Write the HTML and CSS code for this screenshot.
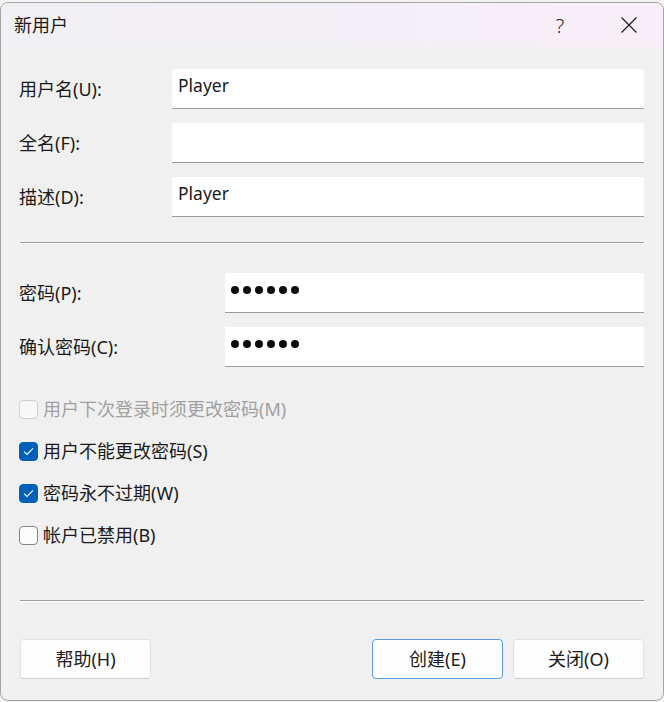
FILE: index.html
```html
<!DOCTYPE html>
<html lang="zh-CN">
<head>
<meta charset="utf-8">
<title>新用户</title>
<link rel="stylesheet" href="styles.css">
</head>
<body>
<div class="window">
  <div class="titlebar">
    <span class="title">新用户</span>
    <span class="cap-btn help">?</span>
    <span class="cap-btn close">
      <svg width="16" height="16" viewBox="0 0 16 16"><path d="M0.5 0.5 L15.5 15.5 M15.5 0.5 L0.5 15.5" stroke="#1b1b1b" stroke-width="1.2" fill="none"/></svg>
    </span>
  </div>
  <div class="content">
    <div class="form form-user">
      <label class="label">用户名(U):</label>
      <div class="field">Player</div>
      <label class="label">全名(F):</label>
      <div class="field"></div>
      <label class="label">描述(D):</label>
      <div class="field">Player</div>
    </div>
    <div class="sep sep-1"></div>
    <div class="form form-pass">
      <label class="label">密码(P):</label>
      <div class="field dots"><i></i><i></i><i></i><i></i><i></i><i></i></div>
      <label class="label">确认密码(C):</label>
      <div class="field dots"><i></i><i></i><i></i><i></i><i></i><i></i></div>
    </div>
    <div class="checks">
      <div class="check disabled"><span class="box"></span><span>用户下次登录时须更改密码(M)</span></div>
      <div class="check"><span class="box on"><svg width="11" height="9" viewBox="0 0 11 9"><path d="M1 4.6 L4 7.4 L10 1.4" stroke="#fff" stroke-width="1.1" fill="none"/></svg></span><span>用户不能更改密码(S)</span></div>
      <div class="check"><span class="box on"><svg width="11" height="9" viewBox="0 0 11 9"><path d="M1 4.6 L4 7.4 L10 1.4" stroke="#fff" stroke-width="1.1" fill="none"/></svg></span><span>密码永不过期(W)</span></div>
      <div class="check"><span class="box"></span><span>帐户已禁用(B)</span></div>
    </div>
    <div class="sep sep-2"></div>
    <div class="buttons">
      <button class="btn">帮助(H)</button>
      <div class="btn-group">
        <button class="btn default">创建(E)</button>
        <button class="btn">关闭(O)</button>
      </div>
    </div>
  </div>
</div>
</body>
</html>
```

FILE: styles.css
```css
* { box-sizing: border-box; }
html, body { margin: 0; padding: 0; }
body {
  background: #f3f3f3;
  width: 664px;
  height: 702px;
  overflow: hidden;
  font-family: "Noto Sans", "Noto Sans CJK SC", sans-serif;
  font-size: 18px;
  color: #1a1a1a;
}
.window {
  margin-top: 2px;
  width: 664px;
  height: 699px;
  border: 1px solid #a3a3a3;
  border-radius: 8px;
  background: #f0f0f0;
  overflow: hidden;
  display: flex;
  flex-direction: column;
}
.titlebar {
  height: 44px;
  flex: none;
  display: flex;
  align-items: center;
  padding-left: 13px;
  padding-right: 11px;
  background: linear-gradient(90deg, #f0eff4 0%, #f3eff6 50%, #f9eef8 100%);
}
.title {
  font-size: 18px;
  line-height: 22px;
  flex: 1;
}
.cap-btn {
  width: 46px;
  height: 44px;
  display: flex;
  align-items: center;
  justify-content: center;
}
.help {
  font-size: 20px;
  font-weight: 300;
  color: #2a2a2a;
  margin-right: 23px;
  padding-top: 1px;
}
.close svg { display: block; }
.content {
  flex: 1;
  padding: 22px 19px 0 18px;
  display: flex;
  flex-direction: column;
}
.form {
  display: grid;
  row-gap: 14px;
  align-items: center;
}
.form-user { grid-template-columns: 153px 1fr; }
.form-pass { grid-template-columns: 206px 1fr; }
.label {
  line-height: 22px;
}
.field {
  height: 40px;
  background: #ffffff;
  border-bottom: 1px solid #9c9c9c;
  padding: 5px 6px 0;
  line-height: 22px;
  font-size: 17.5px;
}
.dots {
  display: flex;
  align-items: center;
  gap: 4px;
  padding: 0 0 5px 6px;
}
.dots i {
  width: 8px;
  height: 8px;
  border-radius: 50%;
  background: #0c0c0c;
}
.sep {
  height: 2px;
  border-top: 1px solid #a0a0a0;
  border-bottom: 1px solid #ffffff;
  flex: none;
}
.sep-1 { margin: 25px 0 29px 1px; }
.sep-2 { margin: 44px 0 37px 1px; }
.checks {
  margin-top: 21px;
  display: flex;
  flex-direction: column;
}
.check {
  height: 42px;
  display: flex;
  align-items: center;
  line-height: 22px;
}
.box {
  width: 19px;
  height: 19px;
  border: 1px solid #858585;
  border-radius: 4px;
  background: #fbfbfb;
  margin-right: 5px;
  flex: none;
  display: flex;
  align-items: center;
  justify-content: center;
}
.box.on {
  background: #005fb8;
  border-color: #005fb8;
}
.check.disabled { color: #a0a0a0; }
.check.disabled .box {
  border-color: #cfcfcf;
  background: #f8f8f8;
}
.buttons {
  display: flex;
  justify-content: space-between;
  padding-left: 1px;
}
.btn-group {
  display: flex;
  gap: 10px;
}
.btn {
  width: 131px;
  height: 40px;
  background: #fdfdfd;
  border: 1px solid #e2e2e2;
  border-bottom-color: #cdcdcd;
  border-radius: 4px;
  font-family: "Noto Sans", "Noto Sans CJK SC", sans-serif;
  font-size: 18px;
  color: #1a1a1a;
  padding: 0;
  line-height: 22px;
}
.btn.default {
  border: 1px solid #5c9fe0;
}
```
